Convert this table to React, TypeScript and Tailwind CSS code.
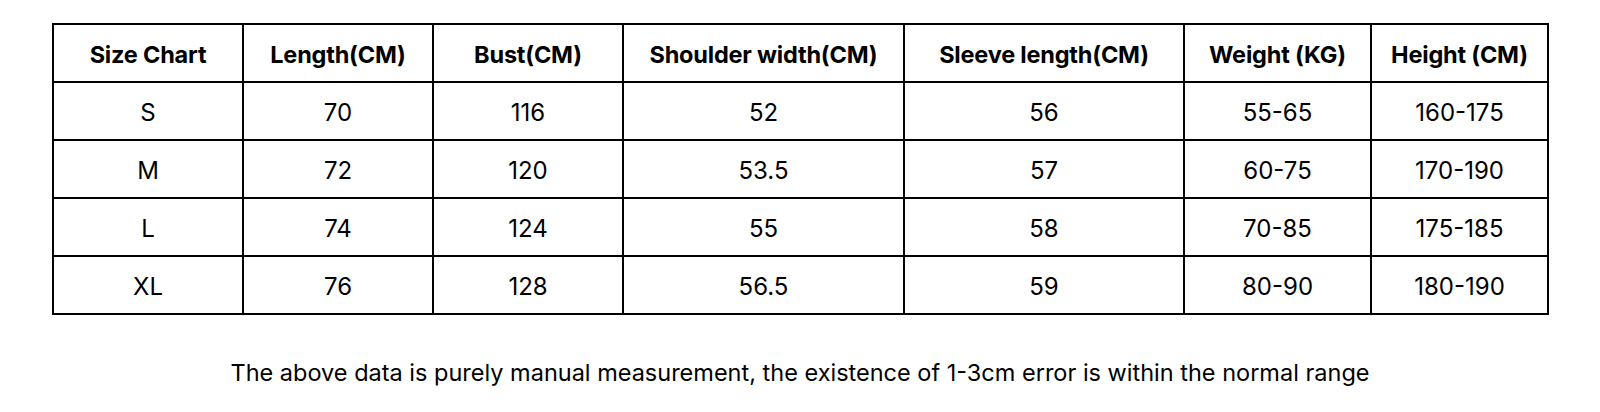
const headers = [
  'Size Chart',
  'Length(CM)',
  'Bust(CM)',
  'Shoulder width(CM)',
  'Sleeve length(CM)',
  'Weight (KG)',
  'Height (CM)',
];

const widths = ['w-[190px]', 'w-[190px]', 'w-[190px]', 'w-[281px]', 'w-[280px]', 'w-[187px]', 'w-[177px]'];

const rows = [
  ['S', '70', '116', '52', '56', '55-65', '160-175'],
  ['M', '72', '120', '53.5', '57', '60-75', '170-190'],
  ['L', '74', '124', '55', '58', '70-85', '175-185'],
  ['XL', '76', '128', '56.5', '59', '80-90', '180-190'],
];

export default function App() {
  return (
    <div className="w-[1600px] h-[412px] bg-white text-black font-['Inter','Liberation_Sans',sans-serif] pt-[23px] pl-[52px]">
      <table className="table-fixed border-collapse w-[1495px] border-2 border-black">
        <colgroup>
          {widths.map((w, i) => (
            <col key={i} className={w} />
          ))}
        </colgroup>
        <thead>
          <tr className="h-[58px]">
            {headers.map((h) => (
              <th key={h} className="border-2 border-black text-center font-bold text-[23.5px] tracking-[-0.2px] p-0 pt-[4px]">
                {h}
              </th>
            ))}
          </tr>
        </thead>
        <tbody>
          {rows.map((row) => (
            <tr key={row[0]} className="h-[58px]">
              {row.map((cell, i) => (
                <td key={i} className="border-2 border-black text-center text-[24px] p-0 pt-[4px]">
                  {cell}
                </td>
              ))}
            </tr>
          ))}
        </tbody>
      </table>
      <p className="mt-[42px] -ml-[52px] text-center text-[23.5px] leading-[32px]">
        The above data is purely manual measurement, the existence of 1-3cm error is within the normal range
      </p>
    </div>
  );
}
